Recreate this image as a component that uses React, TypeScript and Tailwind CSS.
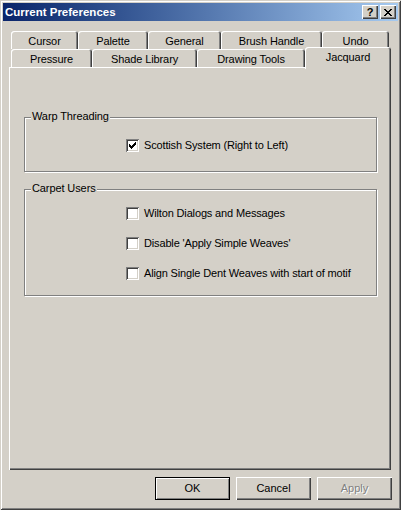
const font = "font-['Liberation_Sans',Arial,sans-serif]";

const raised =
  "shadow-[inset_1px_1px_0_#fff,inset_-1px_-1px_0_#404040,inset_-2px_-2px_0_#808080]";

const CheckMark = () => (
  <svg width="7" height="7" viewBox="0 0 7 7" shapeRendering="crispEdges" className="block">
    <rect x="6" y="0" width="1" height="1" fill="#000" />
    <rect x="5" y="1" width="2" height="1" fill="#000" />
    <rect x="0" y="2" width="1" height="1" fill="#000" />
    <rect x="4" y="2" width="3" height="1" fill="#000" />
    <rect x="0" y="3" width="2" height="1" fill="#000" />
    <rect x="3" y="3" width="3" height="1" fill="#000" />
    <rect x="0" y="4" width="5" height="1" fill="#000" />
    <rect x="1" y="5" width="3" height="1" fill="#000" />
    <rect x="2" y="6" width="1" height="1" fill="#000" />
  </svg>
);

const CheckBox = ({ label, checked }: { label: string; checked?: boolean }) => {
  return (
    <div className="flex items-center gap-[5px]">
      <div className="flex h-[13px] w-[13px] items-center justify-center bg-white shadow-[inset_1px_1px_0_#808080,inset_-1px_-1px_0_#fff,inset_2px_2px_0_#404040,inset_-2px_-2px_0_#d4d0c8]">
        {checked ? <CheckMark /> : null}
      </div>
      <span className="text-[11px] leading-[13px] tracking-[-0.15px] text-black">{label}</span>
    </div>
  );
};

const GroupBox = ({
  title,
  className,
  children,
}: {
  title: string;
  className: string;
  children: React.ReactNode;
}) => {
  return (
    <div
      className={`relative ml-[15px] w-[353px] border border-[#808080] shadow-[inset_1px_1px_0_#fff,1px_1px_0_#fff] ${className}`}
    >
      <span className="absolute left-[6px] top-[-8px] bg-[#d4d0c8] px-[1px] text-[11px] leading-[13px] tracking-[-0.1px] text-black">
        {title}
      </span>
      {children}
    </div>
  );
};

const Tab = ({ label, width }: { label: string; width: string }) => {
  return (
    <div
      className={`flex h-[18px] items-center justify-center rounded-t-[3px] pt-[2px] text-[11px] tracking-[-0.1px] text-black shadow-[inset_1px_1px_0_#fff,inset_-1px_0_0_#404040,inset_-2px_0_0_#808080] ${width}`}
    >
      {label}
    </div>
  );
};

const Button = ({
  label,
  isDefault,
  disabled,
}: {
  label: string;
  isDefault?: boolean;
  disabled?: boolean;
}) => {
  return (
    <div
      className={`flex h-[23px] w-[75px] items-center justify-center text-[11px] ${
        isDefault
          ? "border border-black shadow-[inset_1px_1px_0_#fff,inset_-1px_-1px_0_#808080]"
          : raised
      } ${
        disabled
          ? "text-[#808080] [text-shadow:1px_1px_0_#fff]"
          : "text-black"
      }`}
    >
      {label}
    </div>
  );
};

const TitleButton = ({ children }: { children: React.ReactNode }) => (
  <div
    className={`flex h-[14px] w-[16px] items-center justify-center bg-[#d4d0c8] ${raised}`}
  >
    {children}
  </div>
);

export default function App() {
  return (
    <div
      className={`h-[510px] w-[401px] overflow-hidden bg-[#d4d0c8] p-[3px] ${font} shadow-[inset_1px_1px_0_#d4d0c8,inset_-1px_-1px_0_#404040,inset_2px_2px_0_#fff,inset_-2px_-2px_0_#808080]`}
    >
      {/* title bar */}
      <div className="flex h-[18px] items-center justify-between bg-linear-to-r from-[#0a246a] to-[#a6caf0] pl-[2px] pr-[2px]">
        <span className="text-[11.5px] font-bold leading-[18px] text-white">
          Current Preferences
        </span>
        <div className="flex gap-[2px]">
          <TitleButton>
            <span className="text-[11px] font-bold leading-none text-black">?</span>
          </TitleButton>
          <TitleButton>
            <svg width="8" height="7" viewBox="0 0 8 7" shapeRendering="crispEdges">
              <path d="M0 0h2v1h-2zM6 0h2v1h-2zM1 1h2v1h-2zM5 1h2v1h-2zM2 2h4v1h-4zM3 3h2v1h-2zM2 4h4v1h-4zM1 5h2v1h-2zM5 5h2v1h-2zM0 6h2v1h-2zM6 6h2v1h-2z" fill="#000" />
            </svg>
          </TitleButton>
        </div>
      </div>

      <div className="mt-[10px] pl-[6px]">
        {/* tabs */}
        <div className="flex pl-[2px]">
          <Tab label="Cursor" width="w-[67px]" />
          <Tab label="Palette" width="w-[70px]" />
          <Tab label="General" width="w-[73px]" />
          <Tab label="Brush Handle" width="w-[101px]" />
          <Tab label="Undo" width="w-[67px]" />
        </div>
        <div className="flex h-[18px] items-start pl-[2px]">
          <Tab label="Pressure" width="w-[81px]" />
          <Tab label="Shade Library" width="w-[105px]" />
          <Tab label="Drawing Tools" width="w-[108px]" />
          <div className="relative z-10 -mt-[2px] flex h-[22px] w-[86px] justify-center rounded-t-[3px] bg-[#d4d0c8] pt-[2px] text-[11px] tracking-[-0.1px] text-black shadow-[inset_1px_1px_0_#fff,inset_-1px_0_0_#404040,inset_-2px_0_0_#808080]">
            Jacquard
          </div>
        </div>

        {/* panel */}
        <div className={`h-[403px] w-[382px] overflow-hidden pt-[50px] ${raised}`}>
          <GroupBox title="Warp Threading" className="h-[55px] pl-[101px] pt-[21px]">
            <CheckBox label="Scottish System (Right to Left)" checked />
          </GroupBox>
          <GroupBox title="Carpet Users" className="mt-[17px] h-[107px] pl-[101px] pt-[17px]">
            <div className="flex flex-col gap-[17px]">
              <CheckBox label="Wilton Dialogs and Messages" />
              <CheckBox label="Disable 'Apply Simple Weaves'" />
              <CheckBox label="Align Single Dent Weaves with start of motif" />
            </div>
          </GroupBox>
        </div>
      </div>

      {/* buttons */}
      <div className="mt-[7px] flex gap-[6px] pl-[152px]">
        <Button label="OK" isDefault />
        <Button label="Cancel" />
        <Button label="Apply" disabled />
      </div>
    </div>
  );
}
